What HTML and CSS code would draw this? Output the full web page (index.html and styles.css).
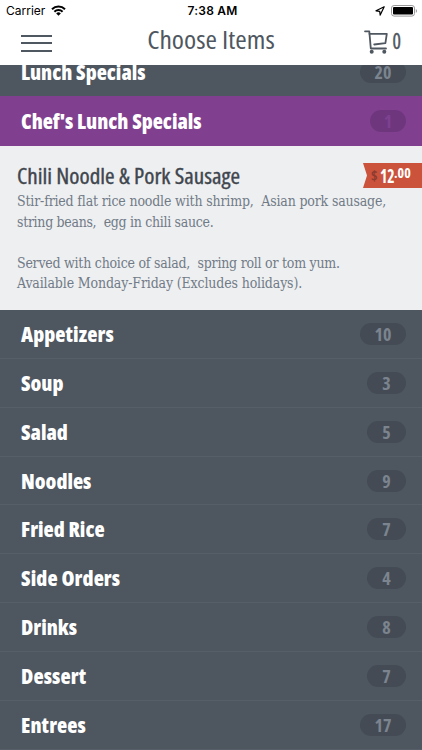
FILE: index.html
```html
<!DOCTYPE html>
<html lang="en">
<head>
<meta charset="utf-8">
<title>Choose Items</title>
<link rel="stylesheet" href="styles.css">
</head>
<body>
<header class="top">
  <div class="status">
    <div class="carrier"><span>Carrier</span>
      <svg width="15" height="11" viewBox="0 0 15 11"><g fill="none" stroke="#000" stroke-width="2"><path d="M1 4.2a9.2 9.2 0 0 1 13 0"/><path d="M3.4 6.7a5.8 5.8 0 0 1 8.2 0"/></g><path d="M7.5 10.8 5.2 8.5a3.2 3.2 0 0 1 4.6 0z"/></svg>
    </div>
    <time>7:38 AM</time>
    <div class="power">
      <svg width="10" height="10" viewBox="0 0 10 10"><path d="M9.2.8 1 4.8l3.7.5.5 3.8z" fill="none" stroke="#000" stroke-width="1.2" stroke-linejoin="round"/></svg>
      <svg width="26" height="12" viewBox="0 0 26 12"><rect x=".5" y=".5" width="23" height="10.6" rx="2.6" fill="#fff" stroke="#999"/><rect x="2" y="2" width="20" height="7.6" rx="1"/><path d="M24.8 4v3.8q1.2-.6 1.2-1.9T24.8 4z" fill="#999"/></svg>
    </div>
  </div>
  <nav class="bar">
    <span class="menu"><i></i><i></i><i></i></span>
    <h1>Choose Items</h1>
    <div class="cart">
      <svg width="24" height="24" viewBox="0 0 24 24"><g fill="none" stroke="#4f5760" stroke-width="1.8" stroke-linejoin="round" stroke-linecap="round"><path d="M1 1.3h4.3l1.5 17.2H22"/><path d="M5.5 3.8H22.8l-1.4 9.4-11.2 1.3"/></g><circle cx="7.7" cy="21.7" r="2" fill="#4f5760"/><circle cx="20.3" cy="21.7" r="2" fill="#4f5760"/></svg>
      <span>0</span>
    </div>
  </nav>
</header>
<main>
  <section class="row first"><h2>Lunch Specials</h2><b class="count wide">20</b></section>
  <section class="row open"><h2>Chef's Lunch Specials</h2><b class="count one">1</b></section>
  <article class="item">
    <div class="head">
      <h3>Chili Noodle &amp; Pork Sausage</h3>
      <div class="price"><span class="cur">$</span><span class="whole">12</span><span class="cents">.00</span></div>
    </div>
    <p><span class="l1">Stir-fried flat rice noodle with shrimp,&nbsp; Asian pork sausage,</span><br><span class="l2">string beans,&nbsp; egg in chili sauce.</span></p>
    <p><span class="l3">Served with choice of salad,&nbsp; spring roll or tom yum.</span><br><span class="l4">Available Monday-Friday (Excludes holidays).</span></p>
  </article>
  <section class="row"><h2 class="roomy">Appetizers</h2><b class="count wide">10</b></section>
  <section class="row"><h2>Soup</h2><b class="count">3</b></section>
  <section class="row"><h2>Salad</h2><b class="count">5</b></section>
  <section class="row"><h2>Noodles</h2><b class="count">9</b></section>
  <section class="row"><h2>Fried Rice</h2><b class="count">7</b></section>
  <section class="row"><h2 class="roomy">Side Orders</h2><b class="count">4</b></section>
  <section class="row"><h2>Drinks</h2><b class="count">8</b></section>
  <section class="row"><h2 class="roomy">Dessert</h2><b class="count">7</b></section>
  <section class="row"><h2 class="roomy">Entrees</h2><b class="count wide">17</b></section>
</main>
</body>
</html>
```
FILE: styles.css
```css
* { box-sizing: border-box; }
body {
  margin: 0;
  height: 750px;
  overflow: hidden;
  background: #4e565f;
  font-family: "Open Sans", sans-serif;
  font-stretch: 75%;
}
h1, h2, h3, p { margin: 0; }
svg { display: block; flex: none; }
.top {
  position: relative;
  z-index: 1;
  height: 65px;
  background: #fff;
  color: #4f5760;
}
.status {
  display: grid;
  grid-template-columns: 1fr auto 1fr;
  align-items: center;
  height: 21px;
  padding: 0 5px 0 6px;
  color: #000;
  font: 12px/21px Inter, sans-serif;
}
.carrier, .power { display: flex; align-items: center; gap: 6px; }
.power { justify-content: flex-end; }
.status time { margin-left: 2px; font-weight: 600; letter-spacing: .2px; }
.bar {
  display: grid;
  grid-template-columns: 1fr auto 1fr;
  align-items: center;
  height: 40px;
  padding: 0 21px;
}
.menu { display: grid; gap: 5.5px; width: 31px; margin-top: 4px; }
.menu i { height: 2px; background: #4f5760; }
h1 { margin-top: -4px; font-size: 26px; font-weight: 400; line-height: 40px; transform: scaleX(1.064); }
.cart { display: flex; justify-content: flex-end; align-items: center; gap: 4px; font-size: 22px; font-weight: 400; line-height: 40px; -webkit-text-stroke: .4px #4f5760; }
.cart svg { margin-top: 1px; }
.cart span { margin-top: -3px; transform: scaleX(.9); }
main { margin-top: -17.8px; }
.row {
  display: flex;
  align-items: center;
  justify-content: space-between;
  height: 48.85px;
  padding: 0 16px 0 21px;
  border-bottom: 1px solid #565e67;
  color: #fff;
}
h2 { font-size: 21px; font-weight: 800; line-height: 28px; }
.roomy { letter-spacing: .1px; }
.count {
  width: 39px;
  height: 22px;
  border-radius: 11px;
  background: #444b54;
  color: #7b848f;
  font-size: 18px;
  font-weight: 700;
  line-height: 22px;
  text-align: center;
}
.wide { width: 46px; }
.one { width: 36px; }
.first { border-bottom: 0; }
.open { height: 50px; border: 0; background: #80408f; }
.open .count { background: #6e367d; color: #7d4190; }
.item { height: 164px; padding: 17px 0 0 17px; background: #eeeff1; }
.head { display: flex; justify-content: space-between; height: 28px; }
h3 {
  color: #3f464e;
  font-size: 21px;
  font-weight: 400;
  line-height: 27px;
  white-space: nowrap;
  transform: scaleX(1.103);
  transform-origin: left;
  -webkit-text-stroke: .35px #3f464e;
}
.price {
  display: flex;
  align-items: center;
  width: 59px;
  height: 25px;
  padding-left: 8px;
  background: #cb523b;
  clip-path: polygon(0 0, 100% 0, 100% 100%, 0 100%, 4px 50%);
  color: #fff;
  font-weight: 700;
  line-height: 25px;
}
.cur { width: 9px; color: #8c3b30; font-size: 14px; }
.whole { width: 14px; font-size: 20px; transform: scaleX(.78); transform-origin: left; }
.cents { padding-bottom: 5px; font-size: 14px; line-height: 20px; }
.item p {
  color: #717b87;
  font: 14px/20.6px "DejaVu Serif Condensed", serif;
  white-space: nowrap;
}
.item p + p { margin-top: 20.6px; }
.l1 { letter-spacing: -.17px; }
.l2 { letter-spacing: -.31px; }
.l3 { letter-spacing: -.24px; }
.l4 { letter-spacing: -.145px; }
```
